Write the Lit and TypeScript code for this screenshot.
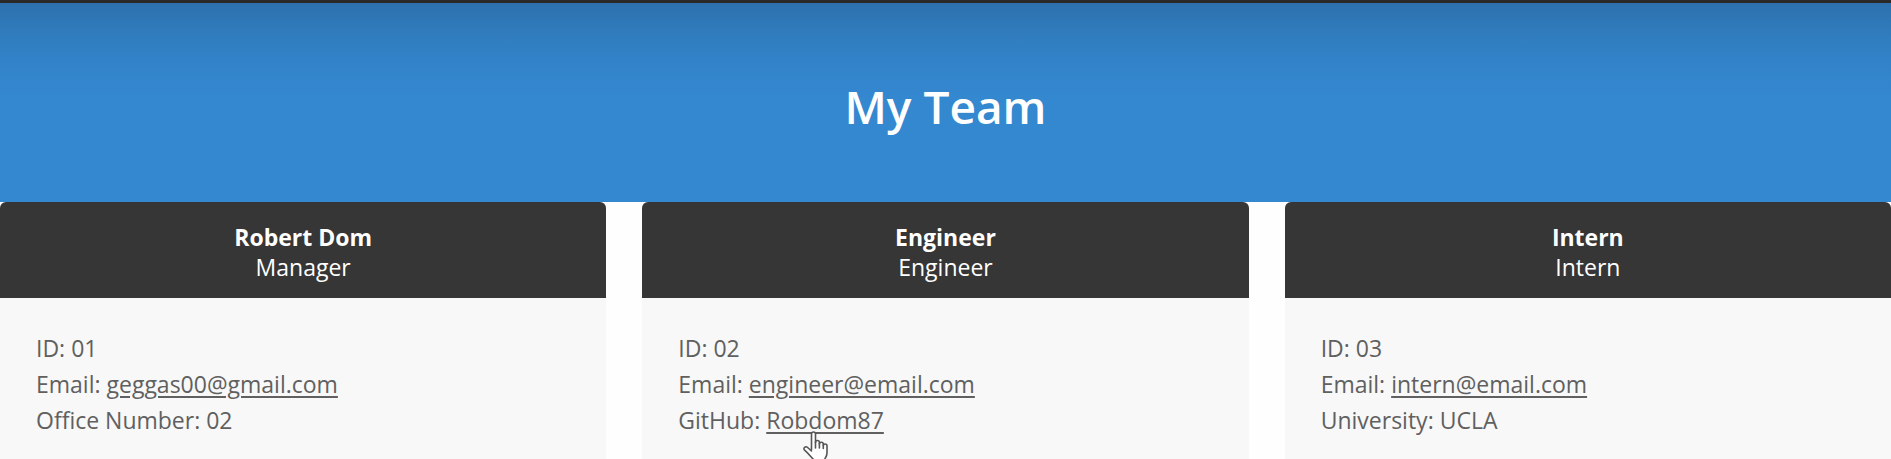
import { LitElement, html, css, svg, nothing } from "lit";
import { customElement, property } from "lit/decorators.js";

interface Member {
  name: string;
  role: string;
  id: string;
  email: string;
  label: string;
  value: string;
  href?: string;
  hovered?: boolean;
}

const TEAM: Member[] = [
  { name: "Robert Dom", role: "Manager", id: "01", email: "geggas00@gmail.com", label: "Office Number", value: "02" },
  { name: "Engineer", role: "Engineer", id: "02", email: "engineer@email.com", label: "GitHub", value: "Robdom87", href: "https://github.com/Robdom87", hovered: true },
  { name: "Intern", role: "Intern", id: "03", email: "intern@email.com", label: "University", value: "UCLA" },
];

const pointer = svg`
  <path d="M8.5 18.5V3.2C8.5 1.8 9.3 1 10.5 1s2 .8 2 2.200V11.500
    c0-1.300.7-2 1.900-2s2 .8 2 2v1.500c0-1.200.8-1.800 1.900-1.800s2 .8 2 2v1.300
    c.1-1 .8-1.500 1.800-1.500 1.200 0 1.900.8 1.900 2V22c0 3-1.500 4.500-2.500 6.500V32H10.500v-3.500
    C8 26 5.500 22.500 1.600 19.200c-.9-.9-.9-2 0-2.800s2.100-.7 3 .1l3.900 3.500"/>
  <path d="M12.500 11v6M16.400 12.500v4.500M20.300 14v3.500"/>`;

@customElement("team-card")
export class TeamCard extends LitElement {
  @property({ attribute: false }) member!: Member;

  static styles = css`
    :host { display: flex; flex-direction: column; min-width: 0; }
    .head {
      padding: 20px 24px 16px;
      border-radius: 6px 6px 0 0;
      background: #363636;
      color: #fff;
      text-align: center;
      line-height: 30px;
    }
    .name { margin: 0; font-size: 23px; font-weight: 700; }
    .role { margin: 0; }
    .details {
      flex: 1;
      margin: 0;
      padding: 32px 36px 16px;
      list-style: none;
      background: #f8f8f8;
      color: #606060;
      line-height: 36px;
    }
    .link {
      position: relative;
      color: inherit;
      text-decoration: underline;
      text-decoration-thickness: 2px;
      text-underline-offset: 3px;
    }
    .pointer {
      position: absolute;
      left: 37px;
      top: 27px;
      width: 26px;
      height: 34px;
      fill: #fff;
      stroke: #555;
      stroke-width: 1.6;
      stroke-linejoin: round;
      stroke-linecap: round;
    }
  `;

  render() {
    const m = this.member;
    return html`
      <header class="head">
        <h2 class="name">${m.name}</h2>
        <p class="role">${m.role}</p>
      </header>
      <ul class="details">
        <li>ID: ${m.id}</li>
        <li>Email: <a class="link" href="mailto:${m.email}">${m.email}</a></li>
        <li>${m.label}: ${m.href
          ? html`<a class="link" href=${m.href}>${m.value}${m.hovered
              ? html`<svg class="pointer" viewBox="0 0 26 34" aria-hidden="true">${pointer}</svg>`
              : nothing}</a>`
          : m.value}</li>
      </ul>
    `;
  }
}

@customElement("app-root")
export class AppRoot extends LitElement {
  static styles = css`
    :host {
      display: flex;
      flex-direction: column;
      min-height: 100vh;
      overflow: hidden;
      background: #fefefe;
      font-family: "Open Sans", "Noto Sans", sans-serif;
      font-size: 23px;
    }
    .hero {
      padding: 71px 36px 64px;
      border-top: 3px solid #2b2928;
      background: linear-gradient(#2e70ae 0, #2f7aba 24px, #3282c8 56px, #3488d0 96px);
      color: #fff;
      text-align: center;
    }
    .title { margin: 0; font-size: 46px; font-weight: 600; line-height: 64px; }
    .team {
      flex: 1;
      display: grid;
      grid-template-columns: repeat(3, minmax(0, 1fr));
      gap: 36px;
    }
  `;

  render() {
    return html`
      <header class="hero"><h1 class="title">My Team</h1></header>
      <main class="team">
        ${TEAM.map((m) => html`<team-card .member=${m}></team-card>`)}
      </main>
    `;
  }
}
